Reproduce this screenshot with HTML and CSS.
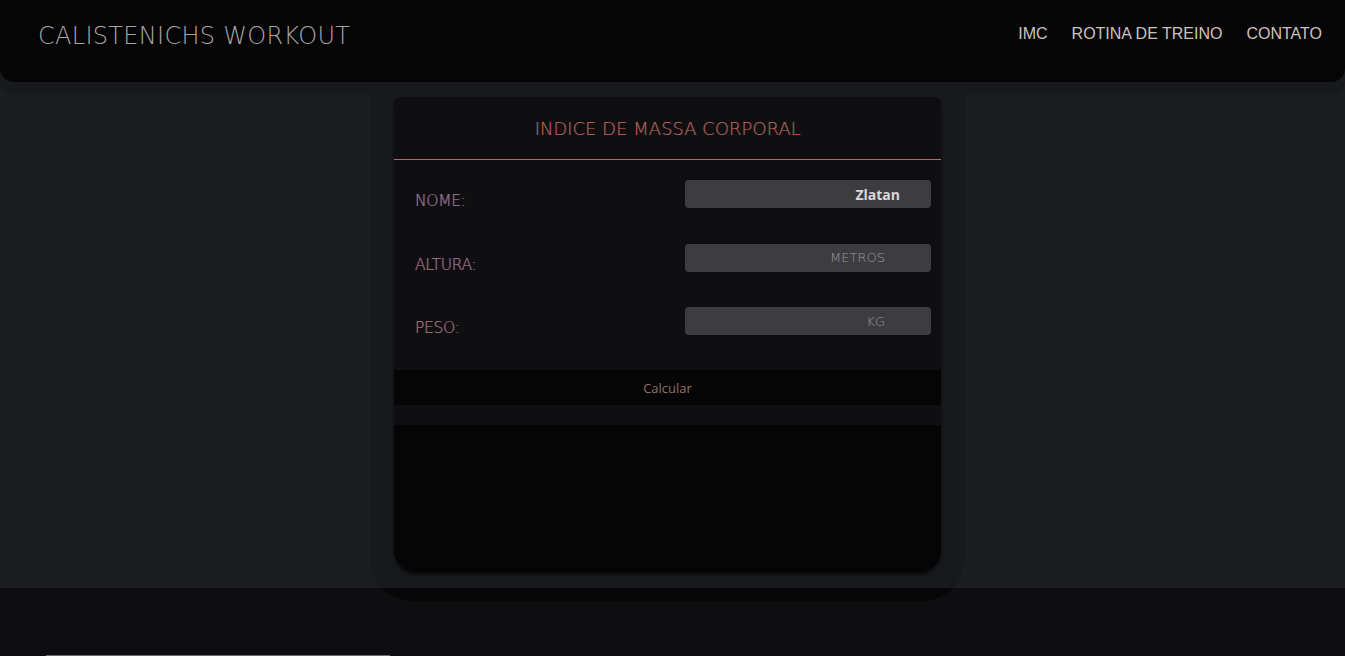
FILE: index.html
```html
<!DOCTYPE html>
<html lang="pt">
<head>
<meta charset="utf-8">
<title>Calistenichs Workout</title>
<link rel="stylesheet" href="styles.css">
</head>
<body>
<header class="topbar">
  <div class="brand">CALISTENICHS WORKOUT</div>
  <nav class="nav">
    <a class="nav-link">IMC</a>
    <a class="nav-link">ROTINA DE TREINO</a>
    <a class="nav-link">CONTATO</a>
  </nav>
</header>
<main class="main">
  <section class="wrapper">
    <div class="card">
      <h1 class="card-title">INDICE DE MASSA CORPORAL</h1>
      <div class="rule"></div>
      <form class="form">
        <div class="row">
          <label class="label">NOME:</label>
          <div class="field"><span class="value">Zlatan</span></div>
        </div>
        <div class="row">
          <label class="label">ALTURA:</label>
          <div class="field"><span class="placeholder">METROS</span></div>
        </div>
        <div class="row">
          <label class="label">PESO:</label>
          <div class="field"><span class="placeholder">KG</span></div>
        </div>
      </form>
      <div class="calc">Calcular</div>
      <div class="spacer"></div>
      <div class="result"></div>
    </div>
  </section>
</main>
<footer class="footer">
  <div class="footer-line"></div>
</footer>
</body>
</html>
```
FILE: styles.css
```css
* { box-sizing: border-box; }
html, body { margin: 0; padding: 0; }
body {
  background: #1c1d21;
  font-family: "Liberation Sans", Arial, sans-serif;
  overflow: hidden;
  height: 656px;
}
.topbar {
  position: relative;
  z-index: 2;
  height: 82px;
  background: #060506;
  border-radius: 0 0 14px 14px;
  box-shadow: 0 13px 0 #18191d;
  display: flex;
  align-items: center;
  justify-content: space-between;
  padding: 0 23px 16px 38px;
}
.brand {
  font-family: "DejaVu Sans", sans-serif;
  font-weight: 200;
  font-size: 24px;
  color: #aaa4a2;
  letter-spacing: 0.3px;
  margin-top: 6px;
}
.nav { display: flex; gap: 24px; margin-top: 2px; }
.nav-link {
  font-family: "Liberation Sans", Arial, sans-serif;
  font-size: 16px;
  color: #cbc2c0;
  text-decoration: none;
}
.main {
  height: 506px;
}
.wrapper {
  position: relative;
  z-index: 1;
  width: 595px;
  margin: 0 0 0 370px;
  padding: 15px 24px 0;
  border-radius: 0 0 42px 42px;
  background: linear-gradient(#18191d 0, #18191d 506px, #070707 506px);
  height: 519px;
}
.card {
  height: 475px;
  background: #0f0f12;
  border-radius: 6px 6px 22px 22px;
  display: flex;
  flex-direction: column;
  box-shadow: 0 3px 3px #0c0c0e;
}
.card-title {
  margin: 0;
  height: 62px;
  line-height: 64px;
  text-align: center;
  font-family: "DejaVu Sans", sans-serif;
  font-weight: 200;
  font-size: 18px;
  color: #cc5e52;
  text-shadow: 1px 0 rgba(40, 150, 160, 0.3);
}
.rule {
  height: 1px;
  background: #b8675f;
}
.form {
  padding: 20px 10px 0 21px;
  height: 210px;
}
.row {
  display: flex;
  align-items: flex-start;
  height: 63.5px;
}
.label {
  margin-top: 11px;
  line-height: 20px;
  font-family: "DejaVu Sans", sans-serif;
  font-weight: 200;
  font-size: 15.5px;
  letter-spacing: -0.3px;
  color: #927a92;
  text-shadow: -0.6px 0 rgba(210, 80, 60, 0.45), 0.6px 0 rgba(70, 110, 210, 0.45);
}
.row:nth-child(2) .label { color: #a27280; }
.row:nth-child(3) .label { color: #a87274; }
.field {
  margin-left: auto;
  width: 246px;
  height: 28px;
  background: #3d3d3f;
  border-radius: 4px;
  display: flex;
  align-items: center;
  justify-content: flex-end;
}
.value {
  font-family: "Open Sans", sans-serif;
  font-weight: 700;
  font-size: 14px;
  color: #dcd6d6;
  padding-right: 31px;
}
.placeholder {
  font-family: "DejaVu Sans", sans-serif;
  font-weight: 200;
  font-size: 13px;
  color: #9a98a4;
  padding-right: 46px;
}
.calc {
  height: 35px;
  background: #050505;
  display: flex;
  align-items: center;
  justify-content: center;
  font-family: "Open Sans", sans-serif;
  font-weight: 400;
  font-size: 13px;
  color: #94706a;
}
.spacer { height: 20px; }
.result {
  flex: 1;
  background: #050505;
  border-radius: 0 0 22px 22px;
}
.footer {
  height: 68px;
  background: #0e0e10;
  display: flex;
  align-items: flex-end;
}
.footer-line {
  margin-left: 46px;
  width: 344px;
  height: 1px;
  background: #6a6a6c;
}
```
